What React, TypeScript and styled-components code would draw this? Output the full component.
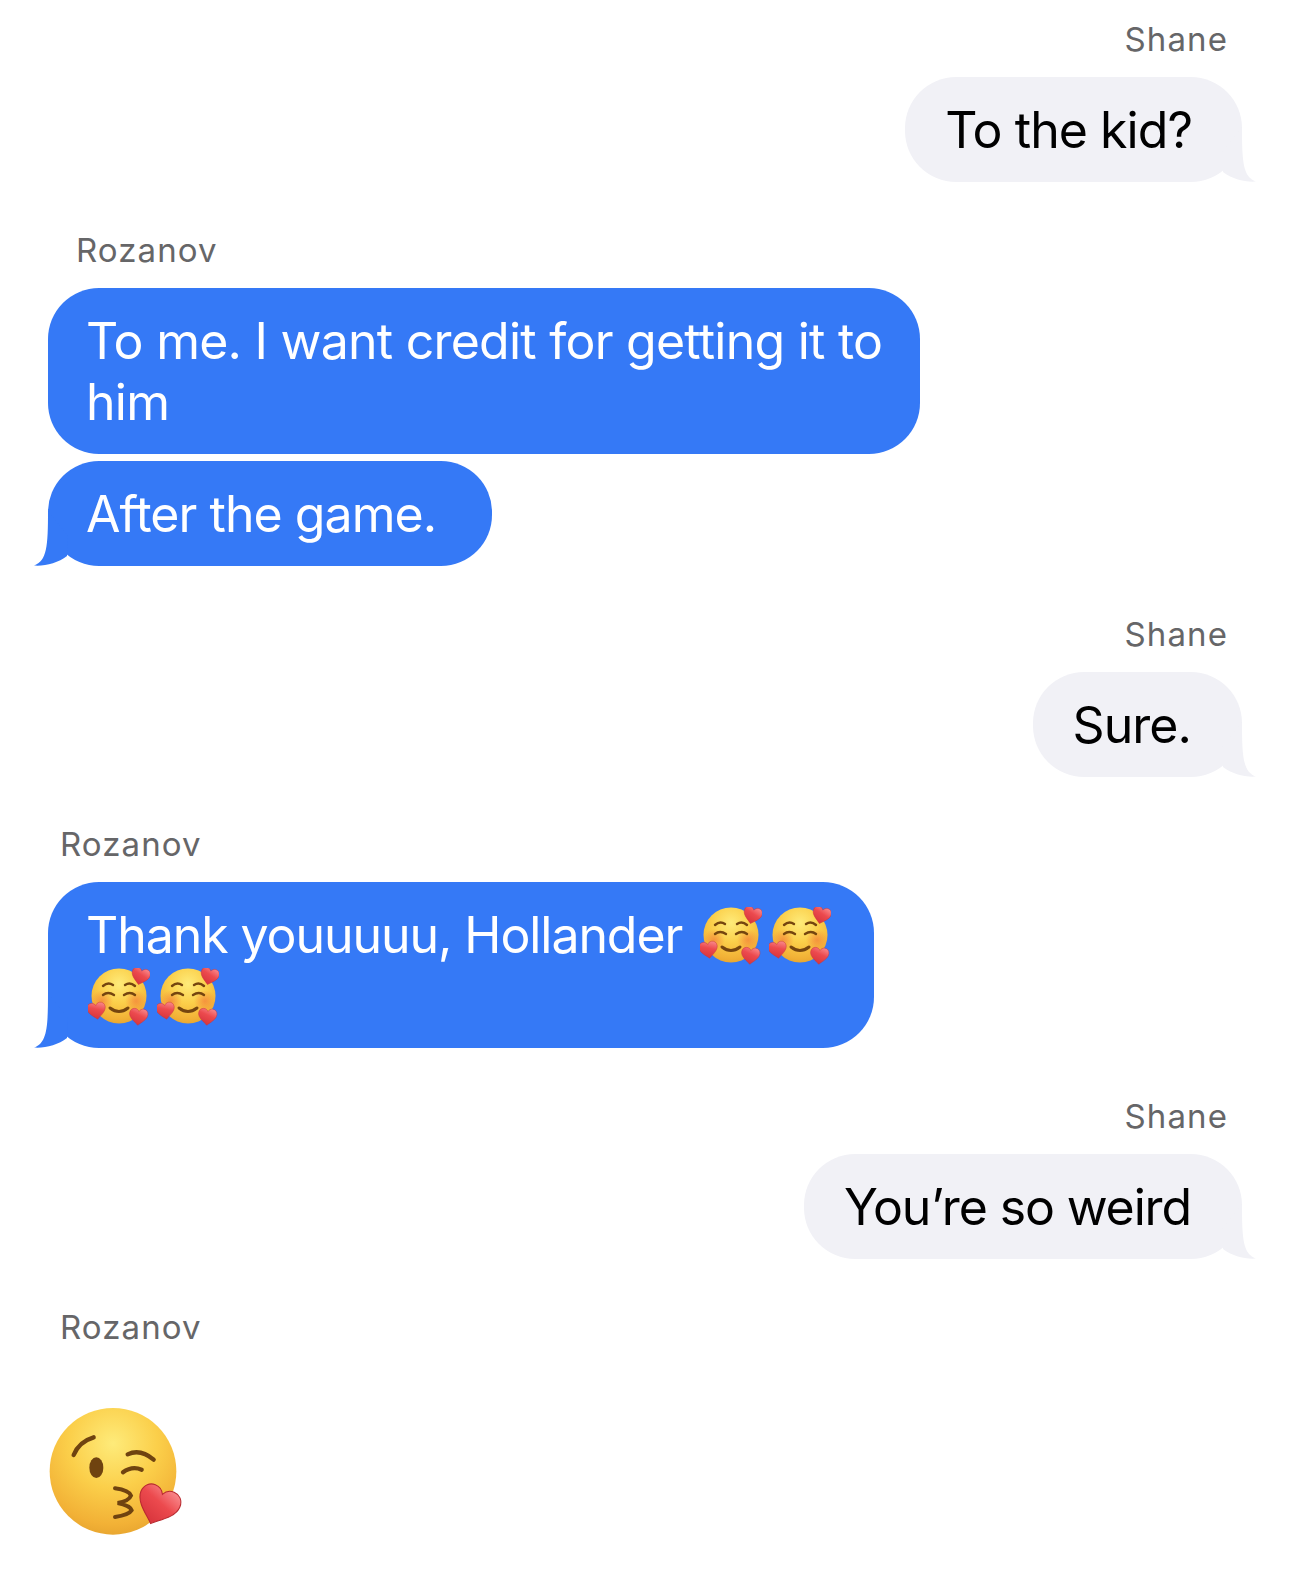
import React from "react";
import styled, { createGlobalStyle } from "styled-components";

const Global = createGlobalStyle`
  html, body { margin: 0; padding: 0; background: #fff; }
`;

const Thread = styled.main`
  width: 1290px;
  height: 1596px;
  box-sizing: border-box;
  padding: 19px 48px 0;
  display: flex;
  flex-direction: column;
  font-family: Inter, "Liberation Sans", sans-serif;
  overflow: hidden;
`;

const Group = styled.section<{ $mine?: boolean; $after?: number }>`
  display: flex;
  flex-direction: column;
  align-items: ${(p) => (p.$mine ? "flex-end" : "flex-start")};
  gap: 7px;
  margin-bottom: ${(p) => p.$after ?? 48}px;
`;

const Sender = styled.div<{ $mine?: boolean; $indent?: number }>`
  font-size: 33px;
  line-height: 40px;
  color: #666668;
  letter-spacing: 1.1px;
  margin-bottom: 11px;
  ${(p) => (p.$mine ? "margin-right: 14px;" : `margin-left: ${p.$indent ?? 12}px;`)}
`;

const Bubble = styled.div<{ $mine?: boolean; $end?: number; $track?: number }>`
  position: relative;
  box-sizing: border-box;
  padding: 23px ${(p) => p.$end ?? (p.$mine ? 51 : 38)}px 21px ${(p) => (p.$mine ? 40 : 38)}px;
  border-radius: 51px;
  font-size: 50px;
  line-height: 61px;
  letter-spacing: ${(p) => p.$track ?? -0.95}px;
  white-space: nowrap;
  color: ${(p) => (p.$mine ? "#000" : "#fff")};
  background: ${(p) => (p.$mine ? "#f1f1f6" : "#3579f6")};
`;

const TailShape = styled.svg<{ $mine?: boolean }>`
  position: absolute;
  bottom: 0;
  width: 44px;
  height: 60px;
  ${(p) => (p.$mine ? "right: -14px;" : "left: -14px; transform: scaleX(-1);")}
`;

const Tail = ({ mine }: { mine?: boolean }) => (
  <TailShape $mine={mine} viewBox="0 0 44 60" aria-hidden="true">
    <path
      d="M30 5C30 40 31 55 44 59.6C33 60.4 20 57 11 50L10 30Z"
      fill={mine ? "#f1f1f6" : "#3579f6"}
    />
  </TailShape>
);

const InlineEmoji = styled.svg<{ $lead?: number }>`
  width: 62px;
  height: 58px;
  margin-left: ${(p) => p.$lead ?? 0}px;
  margin-right: 7px;
  vertical-align: -12px;
`;

const EmojiLine = styled.span`
  display: block;
  height: 61px;
`;

const BigEmoji = styled.svg`
  display: block;
  width: 137px;
  height: 130px;
  margin: 42px 0 0 -1px;
`;

const Heart = ({ x, y, s, r }: { x: number; y: number; s: number; r: number }) => (
  <g transform={`translate(${x} ${y}) rotate(${r}) scale(${s})`}>
    <path
      d="M0 9C-3 6-10 2-10-3.500C-10-7-7.500-9-4.800-9C-2.600-9-.9-7.800 0-6C.9-7.800 2.600-9 4.800-9C7.500-9 10-7 10-3.500C10 2 3 6 0 9Z"
      fill="url(#heartFill)"
      stroke="#c8343a"
      strokeWidth="0.5"
    />
  </g>
);

const Defs = () => (
  <svg width="0" height="0" style={{ position: "absolute" }} aria-hidden="true">
    <defs>
      <radialGradient id="faceFill" cx="50%" cy="28%" r="78%">
        <stop offset="0%" stopColor="#feeb7a" />
        <stop offset="45%" stopColor="#fbcf4a" />
        <stop offset="82%" stopColor="#f2b136" />
        <stop offset="100%" stopColor="#e3a02c" />
      </radialGradient>
      <radialGradient id="cheekFill" cx="50%" cy="50%" r="50%">
        <stop offset="0%" stopColor="#f3793a" stopOpacity="0.65" />
        <stop offset="100%" stopColor="#f3793a" stopOpacity="0" />
      </radialGradient>
      <linearGradient id="heartFill" x1="0.7" y1="0" x2="0.3" y2="1">
        <stop offset="0%" stopColor="#f88487" />
        <stop offset="40%" stopColor="#ec4a4e" />
        <stop offset="100%" stopColor="#d5323a" />
      </linearGradient>
    </defs>
  </svg>
);

const SmilingHearts = ({ lead }: { lead?: number }) => (
  <InlineEmoji $lead={lead} viewBox="0 0 62 58" role="img" aria-label="smiling face with hearts">
    <circle cx="31" cy="28" r="27.500" fill="url(#faceFill)" />
    <circle cx="14" cy="33" r="11" fill="url(#cheekFill)" />
    <circle cx="48" cy="33" r="11" fill="url(#cheekFill)" />
    <g fill="none" stroke="#75450f" strokeWidth="2.400" strokeLinecap="round">
      <path d="M15 18Q20 13.500 25 17" />
      <path d="M37 17Q42 13.500 47 18" />
      <path d="M15 27Q20 23 26 27" />
      <path d="M36 27Q42 23 47 27" />
      <path d="M22 40Q31 47 40 40" strokeWidth="3" />
    </g>
    <Heart x={52.500} y={8.500} s={0.92} r={14} />
    <Heart x={8.500} y={43} s={0.92} r={-8} />
    <Heart x={50.500} y={49} s={0.92} r={5} />
  </InlineEmoji>
);

const KissingHeart = () => (
  <BigEmoji viewBox="50 50 411 390" role="img" aria-label="face blowing a kiss">
    <circle cx="248" cy="243" r="190" fill="url(#faceFill)" />
    <g fill="none" stroke="#6f4310" strokeLinecap="round">
      <path d="M130 194Q146 154 190 141" strokeWidth="13" />
      <path d="M292 192Q330 174 370 208" strokeWidth="13" />
      <path d="M278 246Q305 226 334 238" strokeWidth="13" />
      <path d="M254 294Q296 300 302 316Q296 332 262 338Q300 346 304 360Q296 374 254 380" strokeWidth="12" />
    </g>
    <ellipse cx="198" cy="232" rx="21" ry="31" fill="#6f4310" />
    <g transform="translate(382 347) rotate(22) scale(6.300)">
      <path
        d="M0 9C-3 6-10 2-10-3.500C-10-7-7.500-9-4.800-9C-2.600-9-.9-7.800 0-6C.9-7.800 2.600-9 4.800-9C7.500-9 10-7 10-3.500C10 2 3 6 0 9Z"
        fill="url(#heartFill)"
        stroke="#b92a30"
        strokeWidth="0.5"
      />
    </g>
  </BigEmoji>
);

export default function App() {
  return (
    <>
      <Global />
      <Defs />
      <Thread>
        <Group $mine>
          <Sender $mine>Shane</Sender>
          <Bubble $mine $end={50}>
            To the kid?
            <Tail mine />
          </Bubble>
        </Group>
        <Group>
          <Sender $indent={28}>Rozanov</Sender>
          <Bubble $track={-0.76}>
            To me. I want credit for getting it to
            <br />
            him
          </Bubble>
          <Bubble $end={56}>
            After the game.
            <Tail />
          </Bubble>
        </Group>
        <Group $mine $after={47}>
          <Sender $mine>Shane</Sender>
          <Bubble $mine $end={51}>
            Sure.
            <Tail mine />
          </Bubble>
        </Group>
        <Group>
          <Sender>Rozanov</Sender>
          <Bubble $track={-1.07} $end={36}>
            <EmojiLine>
              Thank youuuuu, Hollander <SmilingHearts lead={5} />
              <SmilingHearts />
            </EmojiLine>
            <EmojiLine>
              <SmilingHearts lead={2} />
              <SmilingHearts />
            </EmojiLine>
            <Tail />
          </Bubble>
        </Group>
        <Group $mine>
          <Sender $mine>Shane</Sender>
          <Bubble $mine $track={-1.12}>
            You’re so weird
            <Tail mine />
          </Bubble>
        </Group>
        <Group>
          <Sender>Rozanov</Sender>
          <KissingHeart />
        </Group>
      </Thread>
    </>
  );
}
